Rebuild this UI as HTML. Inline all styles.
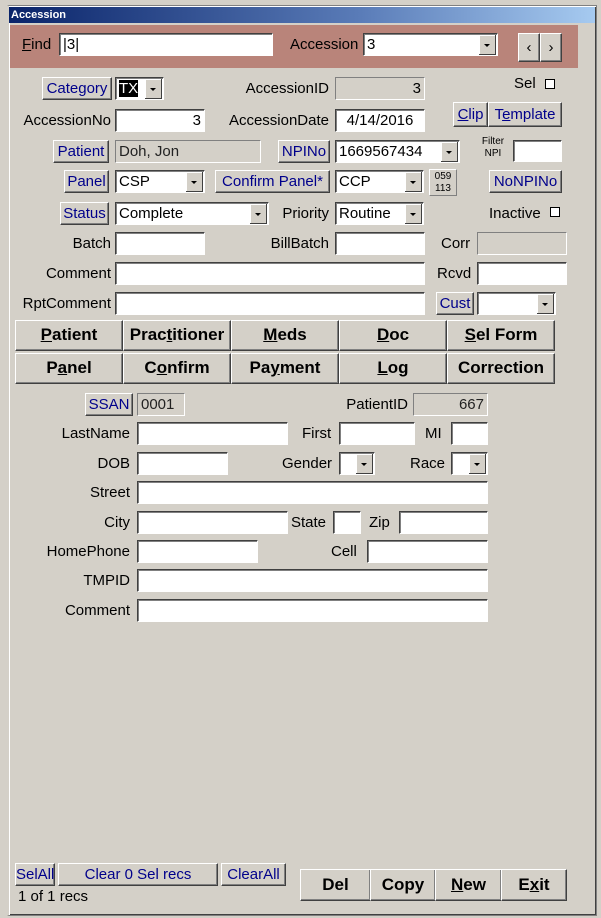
<!DOCTYPE html>
<html><head><style>
*{box-sizing:border-box;margin:0;padding:0}
body{width:601px;height:918px;background:#d4d0c8;position:relative;overflow:hidden;font-family:"Liberation Sans",sans-serif;font-size:15px;color:#000}
div{position:absolute}
.win{left:7px;top:5px;width:590px;height:911px;border:1px solid #808080;border-left:2px solid #d4d0c8;box-shadow:inset 1px 1px #fff,inset -1px -1px #404040}
.title{left:9px;top:7px;width:586px;height:16px;background:linear-gradient(90deg,#0a246a,#5a7cb8 60%,#a6caf0);color:#fff;font-weight:bold;font-size:11px;line-height:16px;padding-left:2px}
.band{left:10px;top:25px;width:568px;height:43px;background:#b9847a}
.l{white-space:nowrap;line-height:23px;height:23px}
.r{text-align:right}
.tb{background:#fff;border:1px solid;border-color:#404040 #fff #fff #404040;box-shadow:inset 1px 1px #808080;height:23px;line-height:21px;padding:0 3px;white-space:nowrap}
.g{background:#d4d0c8}
.btn{background:#d4d0c8;border:1px solid;border-color:#fff #404040 #404040 #fff;box-shadow:inset -1px -1px #808080;text-align:center;line-height:21px;height:23px;color:#00008b;white-space:nowrap}
.dd::after{content:"";position:absolute;right:1px;top:1px;width:16px;height:19px;background:#d4d0c8;border-right:1px solid #404040;border-bottom:1px solid #404040;box-shadow:inset 1px 1px #fff}
.dd::before{content:"";position:absolute;right:7px;top:10px;border:3px solid transparent;border-top:3px solid #000;border-bottom:0;z-index:2}
.tab{background:#d4d0c8;border:1px solid;border-color:#fff #404040 #404040 #fff;box-shadow:inset -1px -1px #808080;text-align:center;font-weight:bold;font-size:17px;line-height:28px;height:31px;width:108px}
.bb{color:#000;font-weight:bold;font-size:17px}
.cb{width:10px;height:10px;background:#fff;border:1px solid #000}
u{text-decoration:underline}
</style></head><body>
<div class="win"></div>
<div class="title">Accession</div>
<div class="band"></div>
<div class="l" style="left:22px;top:33px"><u>F</u>ind</div>
<div class="tb" style="left:59px;top:33px;width:214px">|3|</div>
<div class="l" style="left:290px;top:33px">Accession</div>
<div class="tb dd" style="left:363px;top:33px;width:135px">3</div>
<div class="btn" style="left:518px;top:33px;width:22px;height:29px;line-height:27px;color:#000">&lsaquo;</div>
<div class="btn" style="left:540px;top:33px;width:22px;height:29px;line-height:27px;color:#000">&rsaquo;</div>

<div class="btn" style="left:42px;top:77px;width:70px">Category</div>
<div class="tb dd" style="left:115px;top:77px;width:49px"><span style="background:#000;color:#fff">TX</span></div>
<div class="l r" style="left:200px;top:77px;width:129px">AccessionID</div>
<div class="tb g r" style="left:335px;top:77px;width:90px;border-color:#808080 #fff #fff #808080;box-shadow:none">3</div>
<div class="l" style="left:514px;top:72px">Sel</div>
<div class="cb" style="left:545px;top:79px"></div>

<div class="l r" style="left:10px;top:109px;width:101px">AccessionNo</div>
<div class="tb r" style="left:115px;top:109px;width:90px">3</div>
<div class="l r" style="left:200px;top:109px;width:129px">AccessionDate</div>
<div class="tb" style="left:335px;top:109px;width:90px;text-align:center">4/14/2016</div>
<div class="btn" style="left:453px;top:102px;width:35px;height:25px;line-height:23px"><u>C</u>lip</div>
<div class="btn" style="left:488px;top:102px;width:74px;height:25px;line-height:23px">T<u>e</u>mplate</div>

<div class="btn" style="left:53px;top:140px;width:56px">Patient</div>
<div class="tb g" style="left:115px;top:140px;width:146px;border-color:#808080 #fff #fff #808080;box-shadow:none;color:#222">Doh, Jon</div>
<div class="btn" style="left:278px;top:140px;width:52px">NPINo</div>
<div class="tb dd" style="left:335px;top:140px;width:125px">1669567434</div>
<div style="left:478px;top:136px;width:30px;font-size:10px;line-height:12px;text-align:center">Filter<br>NPI</div>
<div class="tb" style="left:513px;top:140px;width:49px;height:22px"></div>

<div class="btn" style="left:64px;top:170px;width:45px">Panel</div>
<div class="tb dd" style="left:115px;top:170px;width:90px">CSP</div>
<div class="btn" style="left:215px;top:170px;width:115px">Confirm Panel*</div>
<div class="tb dd" style="left:335px;top:170px;width:89px">CCP</div>
<div class="btn" style="left:429px;top:169px;width:28px;height:27px;font-size:10px;line-height:12px;color:#000;box-shadow:none;border-color:#fff #808080 #808080 #fff;padding-top:1px">059<br>113</div>
<div class="btn" style="left:489px;top:170px;width:73px">NoNPINo</div>

<div class="btn" style="left:60px;top:202px;width:49px">Status</div>
<div class="tb dd" style="left:115px;top:202px;width:154px">Complete</div>
<div class="l r" style="left:200px;top:202px;width:129px">Priority</div>
<div class="tb dd" style="left:335px;top:202px;width:89px">Routine</div>
<div class="l" style="left:489px;top:202px">Inactive</div>
<div class="cb" style="left:550px;top:207px"></div>

<div class="l r" style="left:10px;top:232px;width:101px">Batch</div>
<div class="tb" style="left:115px;top:232px;width:90px"></div>
<div class="l r" style="left:200px;top:232px;width:129px">BillBatch</div>
<div class="tb" style="left:335px;top:232px;width:90px"></div>
<div class="l" style="left:441px;top:232px">Corr</div>
<div class="tb g" style="left:477px;top:232px;width:90px;border-color:#808080 #fff #fff #808080;box-shadow:none"></div>

<div class="l r" style="left:10px;top:262px;width:101px">Comment</div>
<div class="tb" style="left:115px;top:262px;width:310px"></div>
<div class="l" style="left:437px;top:262px">Rcvd</div>
<div class="tb" style="left:477px;top:262px;width:90px"></div>

<div class="l r" style="left:10px;top:292px;width:101px">RptComment</div>
<div class="tb" style="left:115px;top:292px;width:310px"></div>
<div class="btn" style="left:436px;top:292px;width:38px">Cust</div>
<div class="tb dd" style="left:477px;top:292px;width:79px"></div>

<div class="tab" style="left:15px;top:320px"><u>P</u>atient</div>
<div class="tab" style="left:123px;top:320px">Prac<u>t</u>itioner</div>
<div class="tab" style="left:231px;top:320px"><u>M</u>eds</div>
<div class="tab" style="left:339px;top:320px"><u>D</u>oc</div>
<div class="tab" style="left:447px;top:320px"><u>S</u>el Form</div>
<div class="tab" style="left:15px;top:353px">P<u>a</u>nel</div>
<div class="tab" style="left:123px;top:353px">C<u>o</u>nfirm</div>
<div class="tab" style="left:231px;top:353px">Pa<u>y</u>ment</div>
<div class="tab" style="left:339px;top:353px"><u>L</u>og</div>
<div class="tab" style="left:447px;top:353px">Correction</div>

<div class="btn" style="left:85px;top:393px;width:48px">SSAN</div>
<div class="tb g" style="left:137px;top:393px;width:48px;border-color:#808080 #fff #fff #808080;box-shadow:none;color:#222">0001</div>
<div class="l r" style="left:290px;top:393px;width:118px">PatientID</div>
<div class="tb g r" style="left:413px;top:393px;width:75px;border-color:#808080 #fff #fff #808080;box-shadow:none;color:#222">667</div>

<div class="l r" style="left:20px;top:422px;width:110px">LastName</div>
<div class="tb" style="left:137px;top:422px;width:151px"></div>
<div class="l" style="left:302px;top:422px">First</div>
<div class="tb" style="left:339px;top:422px;width:76px"></div>
<div class="l" style="left:425px;top:422px">MI</div>
<div class="tb" style="left:451px;top:422px;width:37px"></div>

<div class="l r" style="left:20px;top:452px;width:110px">DOB</div>
<div class="tb" style="left:137px;top:452px;width:91px"></div>
<div class="l" style="left:282px;top:452px">Gender</div>
<div class="tb dd" style="left:339px;top:452px;width:36px"></div>
<div class="l" style="left:410px;top:452px">Race</div>
<div class="tb dd" style="left:451px;top:452px;width:37px"></div>

<div class="l r" style="left:20px;top:481px;width:110px">Street</div>
<div class="tb" style="left:137px;top:481px;width:351px"></div>

<div class="l r" style="left:20px;top:511px;width:110px">City</div>
<div class="tb" style="left:137px;top:511px;width:151px"></div>
<div class="l" style="left:291px;top:511px">State</div>
<div class="tb" style="left:333px;top:511px;width:28px"></div>
<div class="l" style="left:369px;top:511px">Zip</div>
<div class="tb" style="left:399px;top:511px;width:89px"></div>

<div class="l r" style="left:20px;top:540px;width:110px">HomePhone</div>
<div class="tb" style="left:137px;top:540px;width:121px"></div>
<div class="l" style="left:331px;top:540px">Cell</div>
<div class="tb" style="left:367px;top:540px;width:121px"></div>

<div class="l r" style="left:20px;top:569px;width:110px">TMPID</div>
<div class="tb" style="left:137px;top:569px;width:351px"></div>
<div class="l r" style="left:20px;top:599px;width:110px">Comment</div>
<div class="tb" style="left:137px;top:599px;width:351px"></div>

<div class="btn" style="left:15px;top:863px;width:40px">SelAll</div>
<div class="btn" style="left:58px;top:863px;width:160px">Clear 0 Sel recs</div>
<div class="btn" style="left:221px;top:863px;width:65px">ClearAll</div>
<div class="l" style="left:18px;top:885px">1 of 1 recs</div>
<div class="btn bb" style="left:300px;top:869px;width:71px;height:32px;line-height:30px">Del</div>
<div class="btn bb" style="left:370px;top:869px;width:66px;height:32px;line-height:30px">Copy</div>
<div class="btn bb" style="left:435px;top:869px;width:67px;height:32px;line-height:30px"><u>N</u>ew</div>
<div class="btn bb" style="left:501px;top:869px;width:66px;height:32px;line-height:30px">E<u>x</u>it</div>
</body></html>
